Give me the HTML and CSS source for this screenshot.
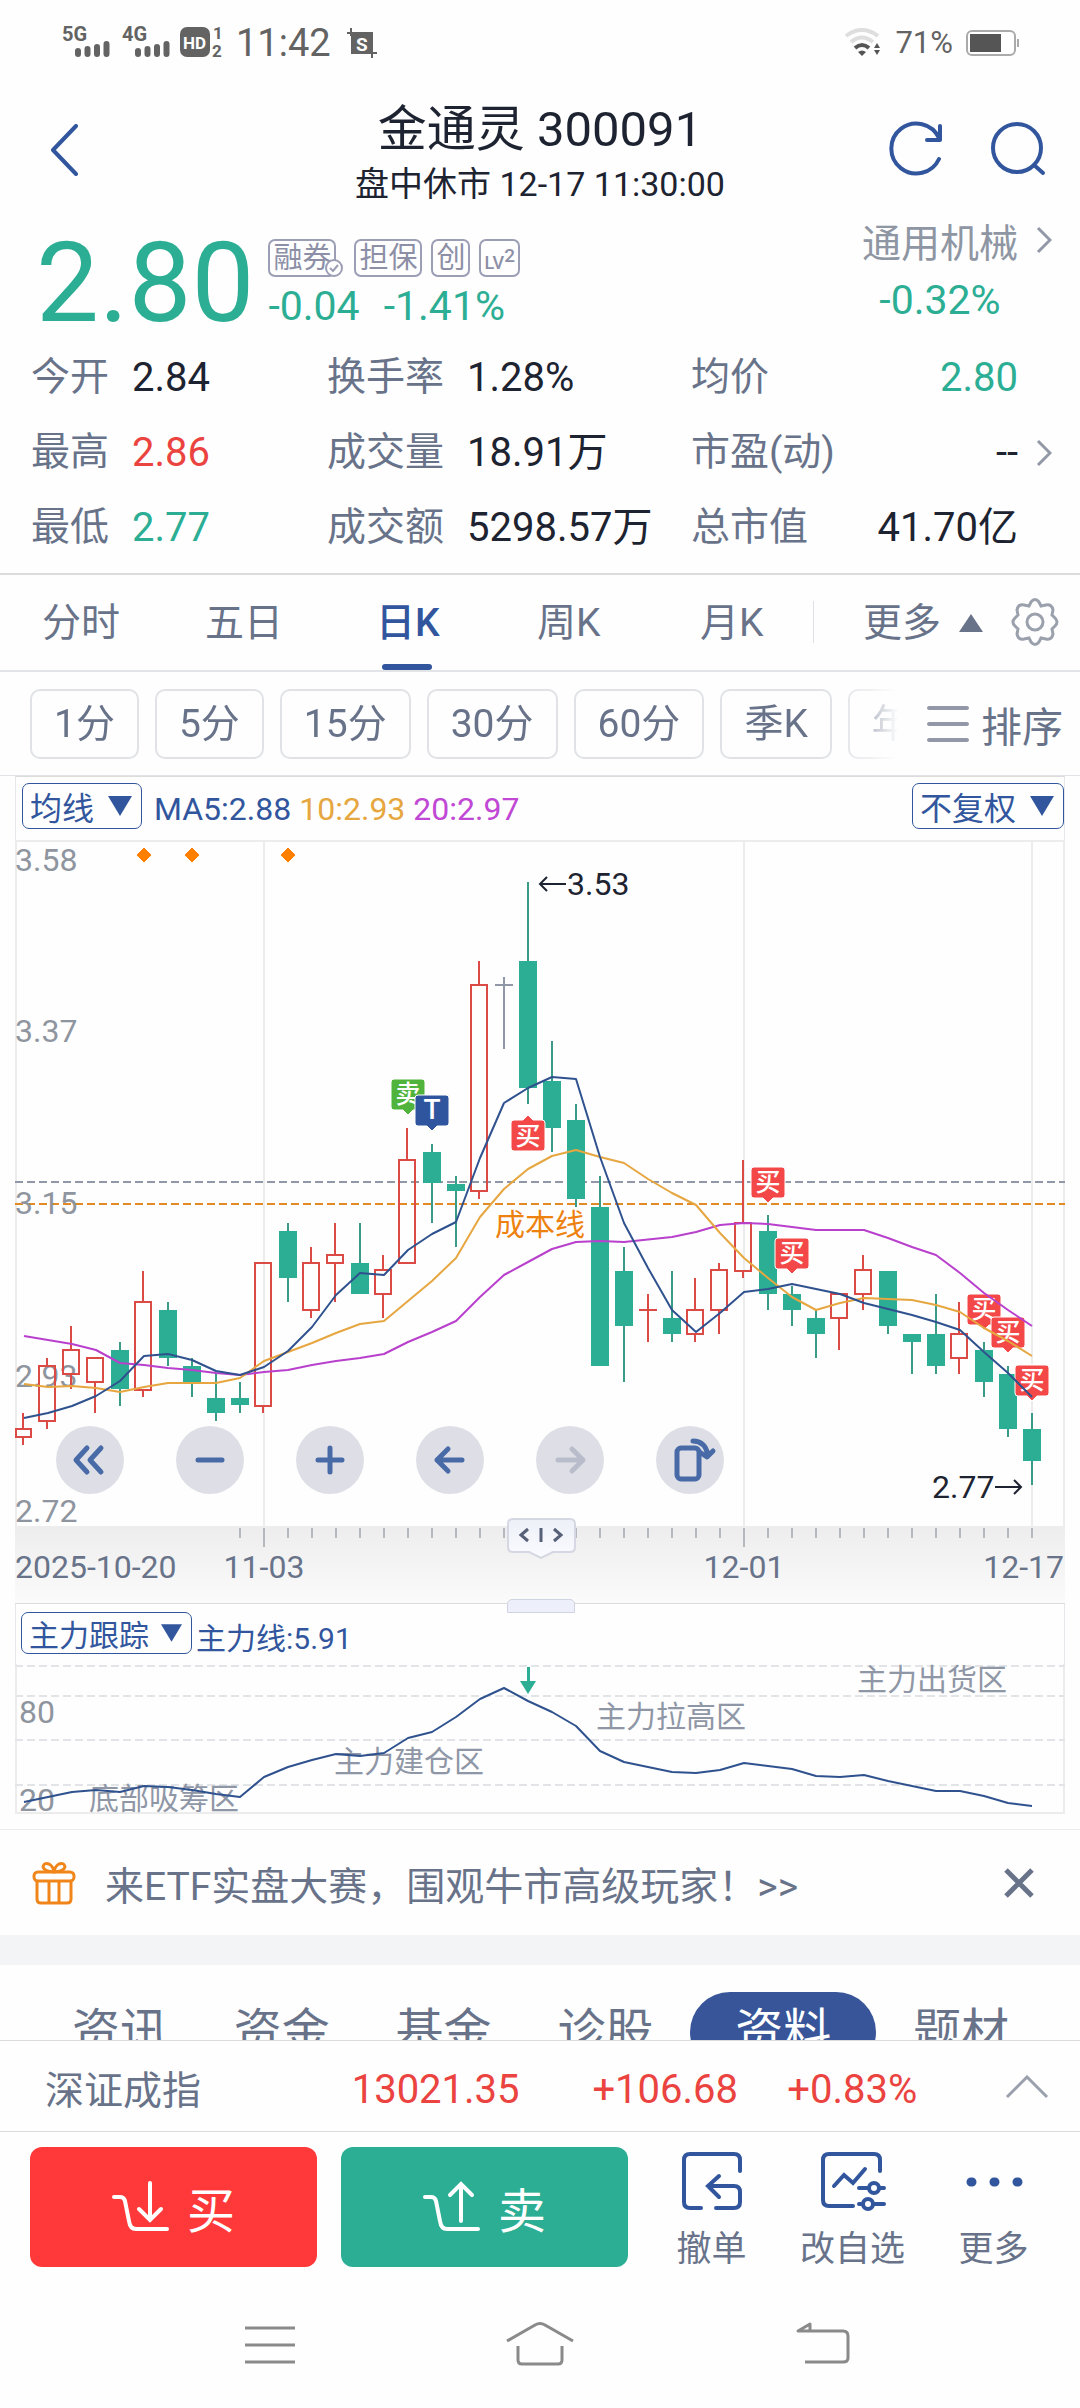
FILE: index.html
```html
<!DOCTYPE html>
<html lang="zh-CN">
<head>
<meta charset="utf-8">
<meta name="viewport" content="width=device-width, initial-scale=1">
<title>金通灵 300091</title>
<link rel="stylesheet" href="styles.css">
</head>
<body>
<div class="status">
  <svg class="status-signal" width="184" height="50" viewBox="62 18 184 50" aria-hidden="true">
    <g class="status-text"><text x="62" y="41">5G</text><text x="122" y="41">4G</text></g>
    <path class="signal-bars" d="M78 51v3M87.500 49v5M97 47v7M106.500 44v10M138 51v3M147.500 49v5M157 47v7M166.500 44v10"/>
    <rect x="180" y="27" width="30" height="30" rx="7" fill="#636363"/>
    <text class="status-hd" x="183" y="49">HD</text>
    <g class="status-sim"><text x="213" y="39">1</text><text x="212" y="57">2</text></g>
  </svg>
  <span class="clock">11:42</span>
  <svg width="30" height="30" viewBox="0 0 30 30" aria-hidden="true">
    <path d="M4 4h22v22H4z" fill="#636363"/><path d="M0 5h6M4 0v8M24 25h6M25 22v8" stroke="#636363" stroke-width="2"/>
    <text class="status-s" x="9" y="23">S</text>
  </svg>
  <span class="spacer"></span>
  <svg width="38" height="30" viewBox="0 0 38 30" fill="none" aria-hidden="true">
    <path d="M2 8q16-12 32 0" stroke="#dedede" stroke-width="4"/><path d="M7 14q11-9 22 0" stroke="#dedede" stroke-width="4"/>
    <path d="M11 20q7-6 14 0" stroke="#555" stroke-width="4"/><path d="M14 24q4-3 8 0l-4 4zM30 20l3-5 3 5zM30 22h6l-3 5z" fill="#555"/>
  </svg>
  <span class="battery-text">71%</span>
  <svg width="54" height="28" viewBox="0 0 54 28" aria-hidden="true">
    <rect x="1" y="2" width="48" height="24" rx="5" fill="#fff" stroke="#aaa" stroke-width="2"/><path d="M4 5h31v18H4z" fill="#555"/><path d="M52 10v8" stroke="#aaa" stroke-width="2"/>
  </svg>
</div>

<header class="header">
  <button class="icon-btn back" aria-label="返回"><svg width="28" height="52" viewBox="0 0 28 52"><path d="M26 2L3 26l23 24"/></svg></button>
  <div class="heading"><h1>金通灵 300091</h1><p>盘中休市 12-17 11:30:00</p></div>
  <div class="header-actions">
    <button class="icon-btn" aria-label="刷新"><svg width="56" height="56" viewBox="0 0 56 56"><path d="M51 38A25 25 0 1 1 51 17M52 5v14H39"/></svg></button>
    <button class="icon-btn" aria-label="搜索"><svg width="56" height="56" viewBox="0 0 56 56"><circle cx="27" cy="27" r="24"/><path d="M44 44l9 8"/></svg></button>
  </div>
</header>

<main class="content">
  <section class="quote">
    <strong class="price">2.80</strong>
    <div class="quote-mid">
      <div class="badges">
        <span class="badge badge-check">融券<svg class="check" width="18" height="18" viewBox="0 0 18 18"><circle cx="9" cy="9" r="8"/><path d="M5 9l3 3 5-6"/></svg></span>
        <span class="badge">担保</span><span class="badge">创</span><span class="badge badge-lv">LV<sup>2</sup></span>
      </div>
      <div class="change"><span>-0.04</span><span>-1.41%</span></div>
    </div>
    <a class="sector" href="#sector">
      <span class="sector-text"><span>通用机械</span><span class="down">-0.32%</span></span>
      <svg class="chevron" width="16" height="28" viewBox="0 0 16 28"><path d="M2 2l12 12L2 26"/></svg>
    </a>
  </section>

  <section class="stats-wrap">
    <dl class="stats">
      <div><dt>今开</dt><dd>2.84</dd></div><div><dt>换手率</dt><dd>1.28%</dd></div><div><dt>均价</dt><dd class="down">2.80</dd></div>
      <div><dt>最高</dt><dd class="up">2.86</dd></div><div><dt>成交量</dt><dd>18.91万</dd></div><div><dt>市盈(动)</dt><dd>--</dd></div>
      <div><dt>最低</dt><dd class="down">2.77</dd></div><div><dt>成交额</dt><dd>5298.57万</dd></div><div><dt>总市值</dt><dd>41.70亿</dd></div>
    </dl>
    <svg class="chevron" width="16" height="28" viewBox="0 0 16 28"><path d="M2 2l12 12L2 26"/></svg>
  </section>

  <nav class="periods">
    <button>分时</button><button>五日</button><button class="active">日K</button><button>周K</button><button>月K</button>
    <button class="more">更多<svg width="24" height="18" viewBox="0 0 24 18"><path d="M12 0l12 18H0z" fill="#68738a"/></svg></button>
    <button class="gear" aria-label="设置"><svg width="50" height="50" viewBox="0 0 50 50"><path d="M21 5q4-5 8 0l2 4 5-1q6-1 7 5l-1 5 3 3q4 4 0 8l-3 3 1 5q-1 6-7 5l-5-1-2 4q-4 5-8 0l-2-4-5 1q-6 1-7-5l1-5-3-3q-4-4 0-8l3-3-1-5q1-6 7-5l5 1z"/><circle cx="25" cy="25" r="8"/></svg></button>
  </nav>

  <div class="minutes">
    <div class="pills">
      <button>1分</button><button>5分</button><button>15分</button><button>30分</button><button>60分</button><button>季K</button><button>年K</button>
    </div>
    <button class="sort"><svg width="42" height="38" viewBox="0 0 42 38"><path d="M2 3h38M2 19h38M2 35h38"/></svg>排序</button>
  </div>

  <section class="chart">
    <div class="chart-bar">
      <button class="drop">均线<svg width="24" height="20" viewBox="0 0 24 20"><path d="M0 0h24L12 20z"/></svg></button>
      <p class="legend"><span class="ma5">MA5:2.88</span><span class="ma10">10:2.93</span><span class="ma20">20:2.97</span></p>
      <button class="drop drop-right">不复权<svg width="24" height="20" viewBox="0 0 24 20"><path d="M0 0h24L12 20z"/></svg></button>
    </div>
    <div class="plot">
      <svg class="plot-svg" viewBox="15 840 1050 764" role="img" aria-label="日K线图">
        <defs>
          <linearGradient id="axisShade" x1="0" y1="0" x2="0" y2="1"><stop offset="0" stop-color="#ededed"/><stop offset="1" stop-color="#fbfbfb"/></linearGradient>
          <linearGradient id="knob" x1="0" y1="0" x2="0" y2="1"><stop offset="0" stop-color="#edf0f8"/><stop offset="1" stop-color="#fafbff"/></linearGradient>
          <path id="tagShape" d="M-14-36h28q3 0 3 3v25q0 3-3 3h-9l-5 5-5-5h-9q-3 0-3-3v-25q0-3 3-3z"/>
        </defs>
        <path class="frame" d="M16 840v686M1064 840v686M15 841h1050M264 841v685M744 841v685M1032 841v685"/>
        <path d="M15 1526h1050v78H15z" fill="url(#axisShade)"/>
        <path class="ticks" d="M240 1528v10M288 1528v10M312 1528v10M336 1528v10M360 1528v10M384 1528v10M408 1528v10M432 1528v10M456 1528v10M480 1528v10M504 1528v10M576 1528v10M600 1528v10M624 1528v10M648 1528v10M672 1528v10M696 1528v10M720 1528v10M768 1528v10M792 1528v10M816 1528v10M840 1528v10M864 1528v10M888 1528v10M912 1528v10M936 1528v10M960 1528v10M984 1528v10M1008 1528v10M1032 1528v10M264 1528v19M744 1528v19"/>
        <path class="rule" d="M15 1604h1050"/>
        <path d="M144 848l7 7-7 7-7-7zM192 848l7 7-7 7-7-7zM288 848l7 7-7 7-7-7z" fill="#ff8000" stroke="#ff8000"/>
        <path d="M15 1182h1050" stroke="#9098a8" stroke-width="2" stroke-dasharray="8 4"/>
        <path d="M15 1204h1050" stroke="#e08a28" stroke-width="2" stroke-dasharray="8 4"/>
        <g class="price-labels"><text x="15" y="871">3.58</text><text x="15" y="1042">3.37</text><text x="15" y="1214">3.15</text><text x="15" y="1387">2.93</text><text x="15" y="1522">2.72</text></g>
        <path class="red" d="M23 1413v16M23 1437v8M47 1358v8M47 1421v8M71 1326v24M71 1374v15M95 1382v31M143 1271v31M143 1390v7M263 1406v7M311 1247v16M311 1310v8M335 1223v32M335 1263v39M383 1255v15M383 1294v24M407 1128v32M479 961v24M479 1191v8M648 1294v48M639 1310h18M695 1278v32M695 1334v8M719 1263v7M719 1310v24M743 1160v63M743 1271v7M839 1318v32M863 1255v15M863 1294v16M959 1302v32M959 1358v16"/>
        <path class="red" d="M16 1429h15v8h-15zM39 1366h16v55h-16zM63 1350h16v24h-16zM87 1358h16v24h-16zM135 1302h16v88h-16zM255 1263h16v143h-16zM303 1263h16v47h-16zM327 1255h16v8h-16zM375 1270h16v24h-16zM399 1160h16v103h-16zM471 985h16v206h-16zM687 1310h16v24h-16zM711 1270h16v40h-16zM735 1223h16v48h-16zM831 1294h16v24h-16zM855 1270h16v24h-16zM951 1334h16v24h-16z"/>
        <path class="green" d="M120 1342v64M168 1302v64M192 1358v39M216 1374v47M240 1382v31M288 1223v79M360 1223v71M432 1144v79M456 1176v71M528 882v222M552 1041v111M576 1104v103M600 1176v190M624 1247v135M672 1271v71M768 1215v95M792 1286v40M816 1310v48M888 1271v63M912 1334v40M936 1294v80M984 1342v55M1008 1366v71M1032 1413v72"/>
        <path class="green-body" d="M111 1350h18v39h-18zM159 1310h18v48h-18zM183 1366h18v16h-18zM207 1398h18v15h-18zM231 1398h18v7h-18zM279 1231h18v47h-18zM351 1263h18v31h-18zM423 1152h18v31h-18zM447 1184h18v7h-18zM519 961h18v127h-18zM543 1081h18v47h-18zM567 1120h18v79h-18zM591 1207h18v159h-18zM615 1271h18v55h-18zM663 1318h18v16h-18zM759 1231h18v63h-18zM783 1294h18v16h-18zM807 1318h18v16h-18zM879 1271h18v55h-18zM903 1334h18v8h-18zM927 1334h18v32h-18zM975 1350h18v32h-18zM999 1374h18v55h-18zM1023 1429h18v32h-18z"/>
        <path d="M504 977v72M495 985h18" stroke="#9098a8" stroke-width="2"/>
        <g class="tags">
          <g transform="translate(408 1115)"><use href="#tagShape" fill="#50b43c"/><text y="-12">卖</text></g>
          <g transform="translate(432 1131)"><use href="#tagShape" fill="#2f559f"/><text class="tag-t" y="-12">T</text></g>
          <g transform="translate(528 1115)" fill="#f44848"><path d="M-14 36h28q3 0 3-3V8q0-3-3-3H5L0 0l-5 5h-9q-3 0-3 3v25q0 3 3 3z"/><text y="30">买</text></g>
          <g transform="translate(768 1203)" fill="#f44848"><use href="#tagShape"/><text y="-12">买</text></g>
          <g transform="translate(792 1274)" fill="#f44848"><use href="#tagShape"/><text y="-12">买</text></g>
          <g transform="translate(984 1330)" fill="#f44848"><use href="#tagShape"/><text y="-12">买</text></g>
          <g transform="translate(1008 1353)" fill="#f44848"><use href="#tagShape"/><text y="-12">买</text></g>
          <g transform="translate(1032 1401)" fill="#f44848"><use href="#tagShape"/><text y="-12">买</text></g>
        </g>
        <polyline class="line line20" points="24,1336 48,1340 72,1344 96,1350 120,1363 144,1365 168,1368 192,1370 216,1373 240,1375 264,1372 288,1370 312,1365 336,1361 360,1358 384,1354 408,1342 432,1332 456,1321 480,1297 504,1275 528,1262 552,1249 576,1242 600,1241 624,1242 672,1237 696,1232 720,1225 744,1223 768,1224 792,1227 816,1230 864,1230 888,1238 912,1247 936,1255 960,1273 984,1293 1008,1310 1032,1326"/>
        <polyline class="line line10" points="24,1384 48,1387 72,1386 96,1388 120,1392 144,1387 168,1383 216,1383 240,1378 264,1361 288,1352 312,1343 336,1333 360,1324 384,1321 408,1301 432,1281 456,1258 480,1217 504,1189 528,1169 552,1156 576,1150 600,1157 624,1163 648,1179 672,1193 696,1205 720,1233 744,1258 768,1278 792,1297 816,1310 840,1303 864,1298 912,1300 936,1305 960,1312 984,1328 1008,1341 1032,1356"/>
        <polyline class="line line5" points="24,1418 48,1413 72,1406 96,1396 120,1381 144,1356 168,1354 192,1360 216,1371 240,1375 264,1367 288,1351 312,1327 336,1295 360,1273 384,1275 408,1250 432,1234 456,1222 480,1158 504,1103 528,1088 552,1077 576,1079 600,1157 624,1223 648,1268 672,1310 696,1332 720,1313 744,1292 768,1289 792,1284 816,1289 840,1294 864,1303 888,1309 912,1315 936,1322 960,1330 984,1352 1008,1373 1032,1397"/>
        <text class="cost" x="495" y="1235">成本线</text>
        <g class="extremes"><path d="M566 884h-26M547 877l-7 7 7 7M995 1487h26M1014 1480l7 7-7 7"/><text x="567" y="895">3.53</text><text x="932" y="1498">2.77</text></g>
        <g class="dates"><text x="15" y="1578">2025-10-20</text><text x="264" y="1578" text-anchor="middle">11-03</text><text x="744" y="1578" text-anchor="middle">12-01</text><text x="1064" y="1578" text-anchor="end">12-17</text></g>
        <path class="knob" d="M513 1519h57q5 0 5 5v23q0 5-5 5h-17l-12 6-12-6h-16q-5 0-5-5v-23q0-5 5-5z" fill="url(#knob)"/>
        <path class="knob-marks" d="M528 1529l-7 6 7 6M541 1528v14M554 1529l7 6-7 6"/>
      </svg>
      <div class="plot-tools">
        <button aria-label="最早"><svg viewBox="0 0 68 68"><path d="M31 22L20 34l11 12M45 22L34 34l11 12"/></svg></button>
        <button aria-label="缩小"><svg viewBox="0 0 68 68"><path d="M22 34h24"/></svg></button>
        <button aria-label="放大"><svg viewBox="0 0 68 68"><path d="M22 34h24M34 22v24"/></svg></button>
        <button aria-label="左移"><svg viewBox="0 0 68 68"><path d="M46 34H21M32 23L21 34l11 11"/></svg></button>
        <button aria-label="右移" disabled><svg viewBox="0 0 68 68"><path d="M22 34h25M36 23l11 11-11 11"/></svg></button>
        <button aria-label="横屏"><svg viewBox="0 0 68 68"><rect x="21" y="22" width="22" height="31" rx="4"/><path d="M37 15q12 0 15 14M45 27l6 4 6-6"/></svg></button>
      </div>
    </div>

    <div class="chart-bar sub-bar">
      <button class="drop drop-small">主力跟踪<svg width="21" height="18" viewBox="0 0 24 20"><path d="M0 0h24L12 20z"/></svg></button>
      <p class="legend sub-legend">主力线:5.91</p>
      <span class="handle"></span>
    </div>
    <svg class="plot-svg" viewBox="15 1664 1050 150" role="img" aria-label="主力跟踪">
      <path class="frame" d="M16 1664v149M1064 1664v149M15 1813h1050"/>
      <path d="M15 1666h1050M15 1696h1050M15 1740h1050M15 1785h1050" stroke="#e2e4e8" stroke-width="2" stroke-dasharray="8 4"/>
      <g class="price-labels"><text x="19" y="1723">80</text><text x="19" y="1811">20</text></g>
      <g class="zones"><text x="857" y="1690">主力出货区</text><text x="596" y="1727">主力拉高区</text><text x="334" y="1772">主力建仓区</text><text x="89" y="1809">底部吸筹区</text></g>
      <polyline class="line line5" points="24,1802 48,1797 72,1792 96,1790 120,1792 144,1786 168,1787 192,1790 216,1794 240,1797 264,1777 288,1767 312,1760 336,1754 360,1756 384,1753 408,1738 432,1732 456,1717 480,1699 504,1688 528,1701 552,1712 576,1726 600,1751 624,1762 648,1767 672,1772 696,1773 720,1770 744,1763 768,1766 792,1769 816,1776 840,1777 864,1775 888,1781 912,1786 936,1791 960,1791 984,1796 1008,1803 1032,1806"/>
      <path d="M527 1667h3v14h6l-8 13-8-13h7z" fill="#2cae94"/>
    </svg>
  </section>

  <aside class="promo">
    <svg width="44" height="44" viewBox="0 0 44 44" fill="none" stroke="#f08519" stroke-width="3" aria-hidden="true"><rect x="2" y="11" width="40" height="9" rx="4"/><path d="M5 20v18q0 4 4 4h26q4 0 4-4V20M17 20v22M27 20v22M22 11Q12 10 11 6q1-5 6-3 4 2 5 8 1-6 5-8 5-2 6 3-1 4-11 5z"/></svg>
    <a href="#etf">来ETF实盘大赛，围观牛市高级玩家！&gt;&gt;</a>
    <button class="close" aria-label="关闭"><svg width="30" height="30" viewBox="0 0 30 30"><path d="M2 2l26 26M28 2L2 28"/></svg></button>
  </aside>

  <nav class="info-tabs">
    <button>资讯</button><button>资金</button><button>基金</button><button>诊股</button><button class="active">资料</button><button>题材</button>
  </nav>
</main>

<footer class="footer">
  <div class="index-row">
    <span class="index-name">深证成指</span><span class="up">13021.35</span><span class="up">+106.68</span><span class="up">+0.83%</span>
    <button class="expand" aria-label="展开"><svg width="44" height="24" viewBox="0 0 44 24"><path d="M2 22L22 2l20 20"/></svg></button>
  </div>
  <div class="actions">
    <button class="trade buy"><svg width="58" height="54" viewBox="0 0 58 54"><path d="M2 17h6q4 0 5 4l4 20q1 8 7 8h31M38 3v37M27 29l11 11 11-11"/></svg>买</button>
    <button class="trade sell"><svg width="58" height="54" viewBox="0 0 58 54"><path d="M2 17h6q4 0 5 4l4 20q1 8 7 8h31M38 41V4M27 15L38 4l11 11"/></svg>卖</button>
    <div class="tools">
      <button class="tool"><svg width="66" height="60" viewBox="0 0 66 60"><path d="M61 20V9q0-6-6-6H11Q5 3 5 9v42q0 6 6 6h11M37 57h18q6 0 6-6V41q0-6-6-6H29M40 25L29 35l11 11"/></svg>撤单</button>
      <button class="tool"><svg width="66" height="60" viewBox="0 0 66 60"><path d="M60 20V9q0-6-6-6H9Q3 3 3 9v40q0 6 6 6h24M14 35l10-11 9 8 12-14M39 37h9M60 37h4M39 53h3M54 53h10"/><circle cx="54" cy="37" r="5"/><circle cx="48" cy="53" r="5"/></svg>改自选</button>
      <button class="tool"><svg width="66" height="60" viewBox="0 0 66 60"><path class="dots" d="M10 31h1M33 31h1M56 31h1"/></svg>更多</button>
    </div>
  </div>
  <div class="sysnav">
    <button aria-label="菜单"><svg width="72" height="48" viewBox="0 0 72 48"><path d="M17 7h50M17 24h50M17 41h50"/></svg></button>
    <button aria-label="主页"><svg width="72" height="48" viewBox="0 0 72 48"><path d="M3 20L31 4q5-3 10 0l28 16M14 25v14q0 4 4 4h36q4 0 4-4V25"/></svg></button>
    <button aria-label="返回"><svg width="72" height="48" viewBox="0 0 72 48"><path d="M19 10h44q5 0 5 5v22q0 4-5 4H25M30 3L18 10h12z"/></svg></button>
  </div>
</footer>
</body>
</html>
```
FILE: styles.css
```css
* { box-sizing: border-box; }
:root {
  --ink: #1d2330;
  --slate: #68738a;
  --mute: #8f96a3;
  --blue: #31569d;
  --green: #2cae94;
  --red: #ea4340;
  --line: #dcdcdc;
}
html, body { margin: 0; height: 100%; }
body {
  height: 100vh;
  display: flex;
  flex-direction: column;
  overflow: hidden;
  background: #fefefe;
  color: var(--ink);
  font-family: Roboto, "Noto Sans CJK SC", sans-serif;
  font-size: 39px;
}
button {
  font: inherit;
  color: var(--slate);
  background: none;
  border: 0;
  padding: 0;
  margin: 0;
  white-space: nowrap;
}
a { color: inherit; text-decoration: none; }
svg { display: block; flex: none; }
h1, p, dl, dd { margin: 0; font-weight: 400; }
.up { color: var(--red); }
.down { color: var(--green); }
.spacer { flex: 1; }

/* Status bar */
.status {
  height: 85px;
  flex: none;
  display: flex;
  align-items: center;
  padding: 0 60px 0 62px;
  color: #636363;
}
.status-text, .status-hd, .status-sim, .status-s { font-weight: 700; fill: #636363; }
.status-text { font-size: 20px; }
.status-hd { font-size: 17px; fill: #fff; }
.status-sim { font-size: 17px; }
.status-s { font-size: 19px; fill: #fff; }
.signal-bars { stroke: #636363; stroke-width: 6; stroke-linecap: round; }
.clock { font-size: 38px; margin-right: 16px; margin-left: -10px; }
.battery-text { font-size: 31px; margin: 0 13px; }

/* Title bar */
.header {
  flex: none;
  display: grid;
  grid-template-columns: 1fr auto 1fr;
  align-items: center;
  height: 123px;
  padding: 15px 34px 0;
}
.heading { text-align: center; color: var(--ink); }
.heading h1 { font-size: 49px; line-height: 60px; }
.heading p { font-size: 34px; line-height: 48px; }
.icon-btn svg { fill: none; stroke: var(--blue); stroke-width: 4; stroke-linejoin: round; stroke-linecap: round; }
.back { justify-self: start; padding: 0 0 8px 16px; }
.header-actions { display: flex; gap: 46px; justify-content: flex-end; padding-bottom: 10px; }

.content { flex: 1; min-height: 0; overflow: hidden; }

/* Price summary */
.quote { display: flex; align-items: flex-start; padding: 12px 28px 0 36px; height: 132px; }
.price { font-size: 112px; line-height: 126px; font-weight: 400; color: var(--green); }
.quote-mid { padding: 19px 0 0 14px; flex: 1; }
.badges { display: flex; gap: 9px; }
.badge {
  position: relative;
  height: 38px;
  padding: 0 3px;
  border: 2px solid #9b9eb4;
  border-radius: 7px;
  font-size: 29px;
  line-height: 34px;
  color: #8c8fa6;
}
.badge-check { margin-right: 9px; }
.check {
  position: absolute;
  right: -9px;
  bottom: -2px;
  fill: none;
  stroke: #9b9eb4;
  stroke-width: 2;
}
.check circle { fill: #fff; }
.badge-lv { font-size: 18px; font-weight: 500; line-height: 44px; }
.badge-lv sup { font-size: 19px; line-height: 0; }
.change { display: flex; gap: 24px; padding-top: 7px; font-size: 41px; line-height: 44px; color: var(--green); }
.sector { display: flex; color: var(--mute); gap: 18px; }
.sector-text { display: flex; flex-direction: column; gap: 10px; line-height: 46px; text-align: center; padding-top: 1px; }
.sector-text .down { font-size: 41px; }
.sector .chevron { margin-top: 6px; }
.chevron { fill: none; stroke: #9298a5; stroke-width: 3; }

.stats-wrap { display: flex; align-items: center; padding: 0 28px 8px 31px; gap: 18px; border-bottom: 2px solid var(--line); }
.stats { flex: 1; display: grid; grid-template-columns: 296fr 364fr 327fr; }
.stats div { display: flex; line-height: 75px; white-space: nowrap; }
.stats dt { color: var(--slate); margin-right: 23px; }
.stats dd { font-size: 40px; }
.stats div:nth-child(3n) dd { margin-left: auto; }
.stats div:nth-child(3n) dt { margin-right: 0; }

/* Period tabs */
.periods { display: flex; height: 97px; border-bottom: 2px solid #e2e4e8; padding-left: 42px; }
.periods button { position: relative; width: 163px; text-align: left; line-height: 92px; }
.periods button:nth-child(2) { width: 171px; }
.periods button:nth-child(3) { width: 161px; }
.periods button:nth-child(5) { width: 113px; }
.periods .active { color: var(--blue); font-weight: 500; }
.periods .active::after {
  content: "";
  position: absolute;
  left: 6px;
  bottom: 0;
  width: 50px;
  height: 6px;
  border-radius: 3px;
  background: var(--blue);
}
.periods .more { display: flex; align-items: center; gap: 18px; width: 197px; padding-left: 50px; }
.more::before { content: ""; position: absolute; left: 0; top: 26px; height: 42px; border-left: 1px solid #dde0e6; }
.periods .gear { display: flex; align-items: center; width: 50px; padding-bottom: 2px; }
.gear svg { fill: none; stroke: #9aa0ac; stroke-width: 3; }

.minutes { display: flex; height: 104px; align-items: center; padding: 0 17px 0 30px; border-bottom: 1px solid #e2e4e8; }
.pills {
  flex: 1;
  min-width: 0;
  display: flex;
  gap: 16px;
  overflow: hidden;
  -webkit-mask-image: linear-gradient(90deg, #000 92%, transparent 99%);
  mask-image: linear-gradient(90deg, #000 92%, transparent 99%);
}
.pills button { flex: none; height: 70px; padding: 0 22px; border: 2px solid #e0e2e6; border-radius: 10px; line-height: 64px; }
.sort { display: flex; align-items: center; gap: 12px; margin-left: 20px; font-size: 41px; }
.sort svg { fill: none; stroke: #9298a8; stroke-width: 4; stroke-linecap: round; }

/* Charts */
.chart { margin: 0 15px; padding-bottom: 15px; border-top: 1px solid var(--line); }
.chart-bar { position: relative; display: flex; align-items: center; height: 63px; padding: 0 0 6px 6px; border: solid #e6e7ea; border-width: 0 1px; }
.drop {
  display: flex;
  align-items: center;
  justify-content: space-between;
  gap: 14px;
  height: 46px;
  padding: 0 9px 0 7px;
  border: 1px solid var(--blue);
  border-radius: 7px;
  font-size: 32px;
  color: var(--blue);
}
.drop svg { fill: var(--blue); }
.drop-right { margin-left: auto; }
.legend { display: flex; gap: 8px; margin-left: 12px; padding-top: 6px; font-size: 32px; color: var(--blue); }
.ma10 { color: #e6a640; }
.ma20 { color: #c048d4; }
.plot { position: relative; }
.plot-svg { width: 100%; height: auto; }
.frame { fill: none; stroke: #ececec; stroke-width: 2; }
.rule { stroke: var(--line); stroke-width: 2; }
.ticks { stroke: #b5b8bf; stroke-width: 2; }
.price-labels { font-size: 32px; fill: #8f959f; }
.dates { font-size: 32px; fill: #68738a; }
.red { fill: none; stroke: #dc4a46; stroke-width: 2; }
.green { stroke: #3a9c88; stroke-width: 2; }
.green-body { fill: #2cae94; }
.line { fill: none; stroke-width: 2; stroke-linejoin: round; }
.line5 { stroke: #2f528f; }
.line10 { stroke: #e6a640; }
.line20 { stroke: #b840cc; }
.tags { stroke: #fff; stroke-width: 1; }
.tags text { font-size: 25px; fill: #fff; stroke: none; text-anchor: middle; font-weight: 500; }
.tags .tag-t { font-size: 28px; }
.cost { font-size: 30px; fill: #ee8210; }
.extremes { font-size: 32px; fill: var(--ink); }
.extremes path { fill: none; stroke: var(--ink); stroke-width: 2; }
.knob { stroke: #d5d8e2; stroke-width: 2; }
.knob-marks { fill: none; stroke: #566178; stroke-width: 3; }
.plot-tools {
  position: absolute;
  left: 41px;
  bottom: 110px;
  display: flex;
  gap: 52px;
}
.plot-tools button { width: 68px; height: 68px; border-radius: 50%; background: #dedfe6; }
.plot-tools svg { fill: none; stroke: #486ba8; stroke-width: 5; stroke-linecap: round; stroke-linejoin: round; }
.plot-tools button:disabled svg { stroke: #b9bdcb; }
.sub-bar { height: 60px; padding-left: 5px; padding-bottom: 2px; }
.drop-small { height: 42px; font-size: 30px; gap: 12px; }
.sub-legend { font-size: 30px; margin-left: 4px; }
.handle {
  position: absolute;
  left: 50%;
  top: -5px;
  width: 68px;
  height: 14px;
  margin-left: -33px;
  border-radius: 5px 5px 0 0;
  background: #edf0fa;
  border: 1px solid #d0d4e0;
}
.zones { font-size: 30px; fill: #8f97a6; }

/* Promotion */
.promo {
  display: flex;
  align-items: center;
  height: 106px;
  padding: 0 46px 0 32px;
  border-top: 1px solid #ececec;
  color: var(--slate);
}
.promo a { flex: 1; margin-left: 29px; white-space: nowrap; }
.close svg { fill: none; stroke: #68738a; stroke-width: 5; }

.info-tabs { display: flex; justify-content: space-between; align-items: center; padding: 27px 71px 24px 72px; border-top: 30px solid #f3f4f6; }
.info-tabs button { font-size: 48px; line-height: 80px; }
.info-tabs .active { width: 186px; margin: 0 -29px; border-radius: 40px; background: #38559a; color: #fff; }

/* Bottom area */
.footer { flex: none; background: #fefefe; }
.index-row {
  display: grid;
  grid-template-columns: 307fr 241fr 195fr 218fr auto;
  align-items: center;
  height: 92px;
  padding: 2px 31px 0 45px;
  border: solid var(--line);
  border-width: 1px 0;
}
.index-row .up { font-size: 40px; padding-top: 4px; }
.index-name { color: var(--slate); }
.expand svg { fill: none; stroke: #9aa0ac; stroke-width: 3; }
.actions {
  display: grid;
  grid-template-columns: 311fr 300fr 423fr;
  align-items: start;
  height: 152px;
  padding: 15px 16px 0 30px;
}
.trade {
  display: flex;
  align-items: center;
  justify-content: center;
  gap: 17px;
  height: 120px;
  border-radius: 12px;
  color: #fff;
  font-size: 48px;
}
.trade svg { fill: none; stroke: #fff; stroke-width: 4; stroke-linecap: round; }
.buy { margin-right: 24px; background: #ff3939; }
.sell { margin-right: 13px; background: #2cae94; }
.tools { display: grid; grid-template-columns: repeat(3, 1fr); }
.tool { display: flex; flex-direction: column; align-items: center; gap: 13px; padding-top: 4px; font-size: 35px; line-height: 52px; }
.tool svg { fill: none; stroke: var(--blue); stroke-width: 4; stroke-linecap: round; }
.tool .dots { stroke-width: 9; }
.sysnav { display: flex; justify-content: space-around; padding: 37px 126px 39px; height: 124px; }
.sysnav svg { fill: none; stroke: #8a8a8a; stroke-width: 3; stroke-linejoin: round; }
```
